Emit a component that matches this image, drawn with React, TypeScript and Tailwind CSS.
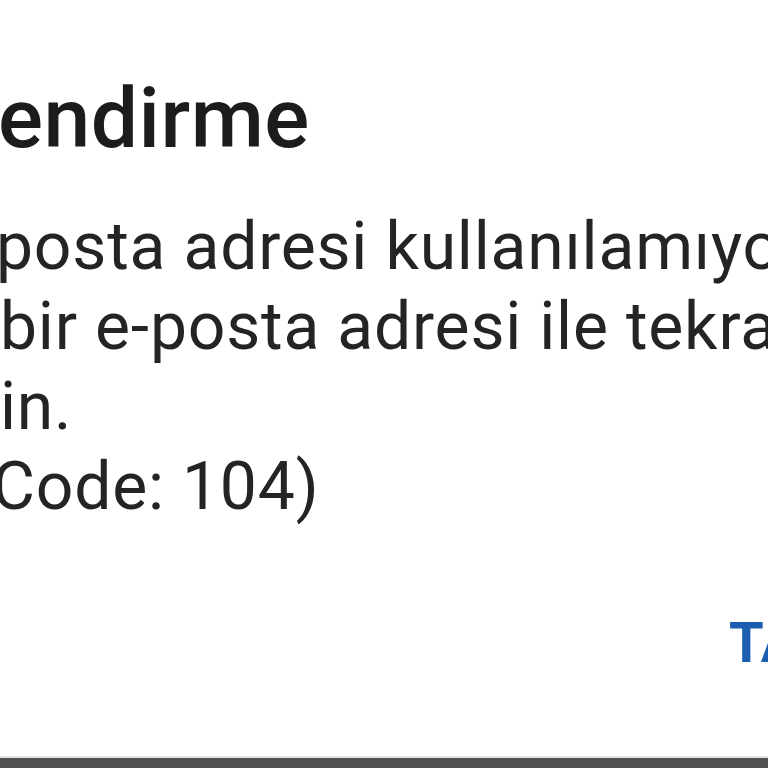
export default function App() {
  return (
    <div className="w-[768px] h-[768px] overflow-hidden bg-white flex flex-col font-['Roboto',sans-serif]">
      {/* dialog body, cropped on both sides */}
      <div className="flex-1 flex flex-col whitespace-nowrap">
        <h1 className="mt-[77px] text-[84px] leading-none font-medium text-[#1c1c1c] -ml-[2px] tracking-[0.5px]">
          endirme
        </h1>
        <p className="mt-[46px] text-[66px] leading-[80px] text-[#242424] tracking-[0.8px]">
          <span className="block -ml-[4px]">posta adresi kullanılamıyor.</span>
          <span className="block">bir e-posta adresi ile tekrar</span>
          <span className="block">in.</span>
          <span className="block -ml-[8px]">Code: 104)</span>
        </p>
        <div className="mt-[88px] pl-[729px]">
          <button className="text-[56px] leading-none font-bold text-[#1b5eb0]">TAMAM</button>
        </div>
      </div>
      {/* system nav bar edge */}
      <div className="h-[12px] bg-[#515151] border-t-2 border-[#e2e2e2]" />
    </div>
  );
}
